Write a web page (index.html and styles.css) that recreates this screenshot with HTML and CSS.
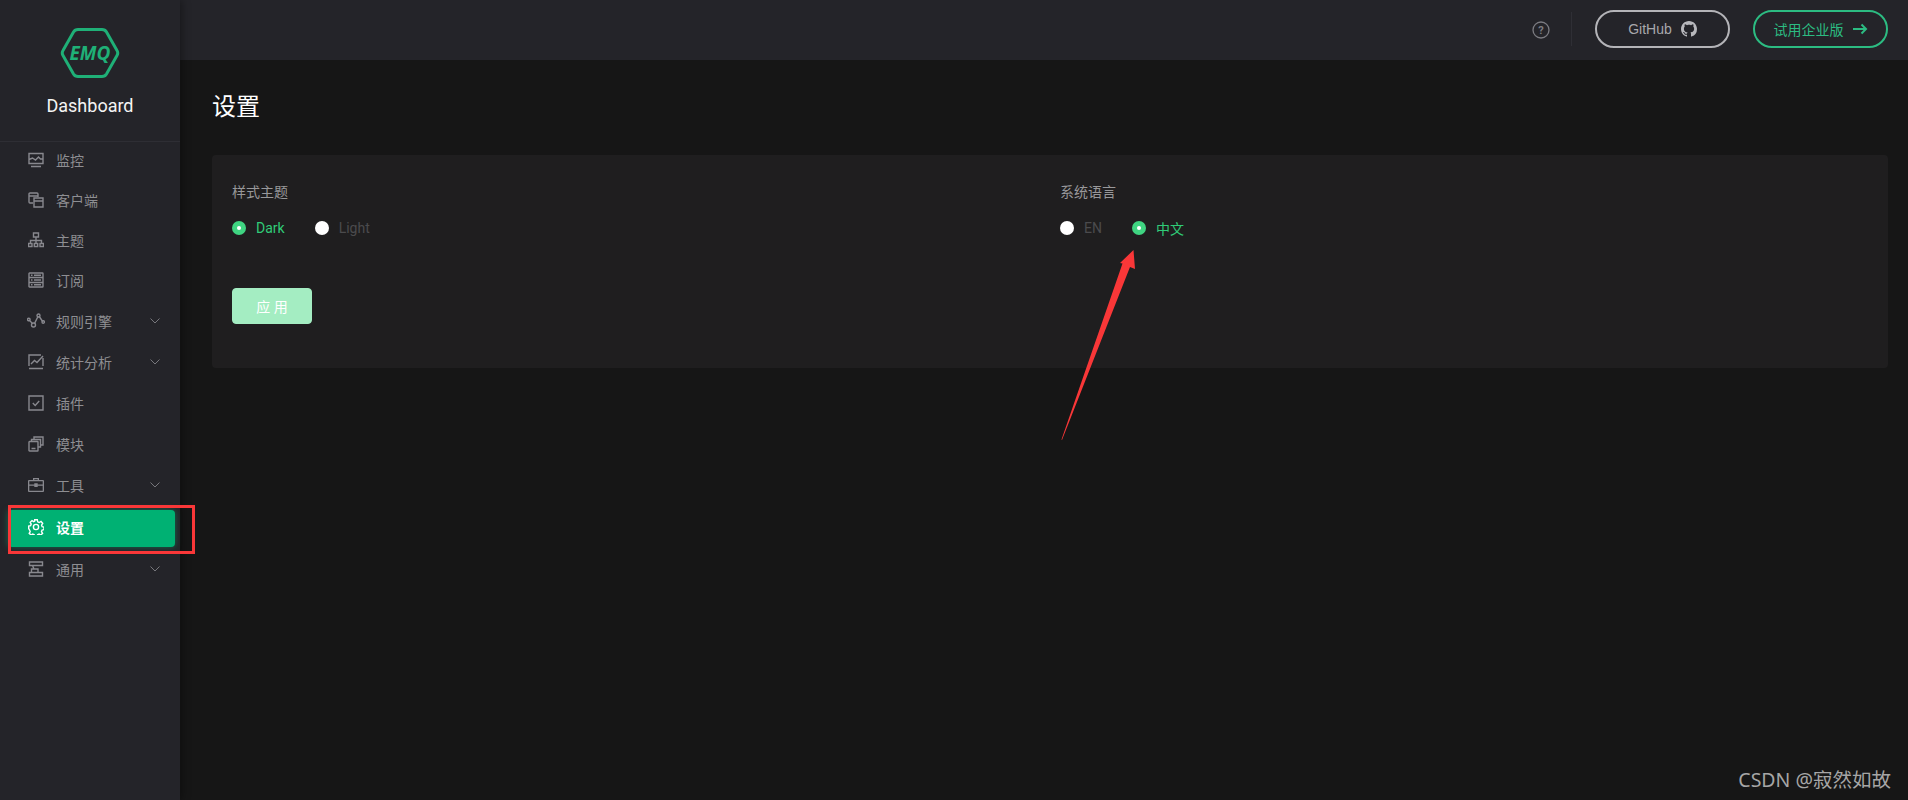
FILE: index.html
```html
<!DOCTYPE html>
<html lang="zh-CN">
<head>
  <meta charset="UTF-8" />
  <meta name="viewport" content="width=device-width, initial-scale=1.0"/>
  <title>EMQ Dashboard</title>
  <link rel="stylesheet" href="styles.css">
</head>
<body>
  <div class="app">
    <aside class="sidebar">
      <div class="logo">
        <svg class="logo-mark" width="60" height="54" viewBox="0 0 60 54">
          <path d="M18 3.500 H42 Q45 3.500 46.500 6 L57 24.500 Q58.500 27 57 29.500 L46.500 48 Q45 50.500 42 50.500 H18 Q15 50.500 13.500 48 L3 29.500 Q1.500 27 3 24.500 L13.500 6 Q15 3.500 18 3.500 Z" fill="none" stroke="#1fb077" stroke-width="3"/>
          <text x="30" y="34" class="logo-text" text-anchor="middle">EMQ</text>
        </svg>
        <div class="logo-title">Dashboard</div>
      </div>

      <nav class="menu">
        <a class="menu-item">
          <svg class="menu-icon" viewBox="0 0 16 16"><path d="M1 1.500h14v10H1zM3 14.500h10M1 7.500l3.500-1.500 3 2 3-3 2 2h2"/></svg>
          <span>监控</span>
        </a>
        <a class="menu-item">
          <svg class="menu-icon" viewBox="0 0 16 16"><path d="M5 11H2a1 1 0 0 1-1-1V2a1 1 0 0 1 1-1h7a1 1 0 0 1 1 1v3M1 4h9M6 6h9v9H6zM6 9h9"/></svg>
          <span>客户端</span>
        </a>
        <a class="menu-item">
          <svg class="menu-icon" viewBox="0 0 16 16"><path d="M5.500 1h5v4h-5zM8 5v4M2.500 11V8.500h11V11M8 9v2M.5 11.500h3.500v3h-3.500zM6.300 11.500h3.400v3h-3.400zM12 11.500h3.500v3H12z"/></svg>
          <span>主题</span>
        </a>
        <a class="menu-item">
          <svg class="menu-icon" viewBox="0 0 16 16"><path d="M1.500 1h13a.5.500 0 0 1 .5.500v13a.5.500 0 0 1-.5.500h-13a.5.500 0 0 1-.5-.500v-13a.5.500 0 0 1 .5-.500zM1 5.500h14M1 10.500h14M3 3.300h1.500M3 8h1.500M3 12.800h1.500M6 3.300h7M6 8h7M6 12.800h7"/></svg>
          <span>订阅</span>
        </a>
        <a class="menu-item tall">
          <svg class="menu-icon wide" viewBox="0 0 18 16"><path d="M2.500 7.500l3 3M7.500 10.500L11 3.500M12.200 3.500l3.500 5"/><circle cx="1.800" cy="6.500" r="1.300"/><circle cx="6.500" cy="12" r="2"/><circle cx="11.500" cy="2.500" r="1.500"/><circle cx="16.200" cy="9" r="1.200"/></svg>
          <span>规则引擎</span>
          <svg class="chevron" viewBox="0 0 10 6"><path d="M.5.500L5 5 9.500.500"/></svg>
        </a>
        <a class="menu-item">
          <svg class="menu-icon" viewBox="0 0 16 16"><path d="M13 1H1v11M1 14.500h14M3 10l3.500-3.500 2.500 2L15 2M15 4v8"/></svg>
          <span>统计分析</span>
          <svg class="chevron" viewBox="0 0 10 6"><path d="M.5.500L5 5 9.500.500"/></svg>
        </a>
        <a class="menu-item tall">
          <svg class="menu-icon" viewBox="0 0 16 16"><path d="M1 1h14v14H1zM4.800 8l2.400 2.400 4-4.400"/></svg>
          <span>插件</span>
        </a>
        <a class="menu-item">
          <svg class="menu-icon" viewBox="0 0 16 16"><path d="M1.500 5.500h8a.5.500 0 0 1 .5.500v8.500a.5.500 0 0 1-.5.500h-8a.5.500 0 0 1-.5-.500V6a.5.500 0 0 1 .5-.500zM3.500 12.500h4M3.500 5V3.500h9V11H10.500M6 3V1h9v8h-2"/></svg>
          <span>模块</span>
        </a>
        <a class="menu-item low">
          <svg class="menu-icon solid" viewBox="0 0 16 16"><path fill-rule="evenodd" d="M5 3V1h6v2h4a1 1 0 0 1 1 1v10a1 1 0 0 1-1 1H1a1 1 0 0 1-1-1V4a1 1 0 0 1 1-1zm1.300 0h3.400V2.300H6.300zM1.300 4.300v3.200h5V6.300h3.400v1.200h5V4.300zm0 4.500v4.900h13.400V8.800h-5V10H6.300V8.800z"/></svg>
          <span>工具</span>
          <svg class="chevron" viewBox="0 0 10 6"><path d="M.5.500L5 5 9.500.500"/></svg>
        </a>
        <a class="menu-item active">
          <svg class="menu-icon" viewBox="0 0 16 16"><circle cx="8" cy="8" r="2.600"/><path d="M6.700.8h2.600l.4 2 1.500.7 1.800-1 1.700 1.900-1.100 1.700.5 1.500 1.900.5v2.500l-1.900.5-.6 1.500 1.100 1.700-1.800 1.800-1.700-1-1.500.6-.5 1.800H6.600l-.4-1.800-1.500-.6-1.700 1-1.800-1.800 1-1.700-.6-1.500L.7 9.600V7.100l1.900-.5.600-1.500-1-1.700L4 1.600l1.700 1 1-.6z"/></svg>
          <span>设置</span>
        </a>
        <a class="menu-item">
          <svg class="menu-icon" viewBox="0 0 16 16"><path d="M1.500 1h13v3.500h-13zM1.500 11.500h13V15h-13zM4.500 4.500L6 8h4v3.500M6 8H3.500v3.500"/></svg>
          <span>通用</span>
          <svg class="chevron" viewBox="0 0 10 6"><path d="M.5.500L5 5 9.500.500"/></svg>
        </a>
      </nav>
    </aside>

    <div class="main">
      <header class="topbar">
        <svg class="help" width="18" height="18" viewBox="0 0 18 18">
          <circle cx="9" cy="9" r="8"/>
          <text x="9" y="13" text-anchor="middle">?</text>
        </svg>
        <span class="topbar-line"></span>
        <a class="pill">
          GitHub
          <svg width="16" height="16" viewBox="0 0 16 16"><path fill="#b8b8bc" d="M8 0C3.580 0 0 3.580 0 8c0 3.540 2.290 6.530 5.470 7.590.4.070.55-.17.55-.38 0-.19-.01-.82-.01-1.490-2.010.37-2.530-.49-2.690-.94-.09-.23-.48-.94-.82-1.130-.28-.15-.68-.52-.01-.53.630-.01 1.080.58 1.230.82.720 1.210 1.870.870 2.330.660.070-.520.280-.870.510-1.070-1.780-.200-3.640-.890-3.640-3.950 0-.870.310-1.590.820-2.150-.080-.200-.360-1.020.080-2.120 0 0 .670-.210 2.200.820.640-.180 1.320-.270 2-.270s1.360.090 2 .270c1.530-1.040 2.200-.820 2.200-.820.440 1.100.160 1.920.080 2.120.510.560.820 1.270.820 2.150 0 3.070-1.870 3.750-3.650 3.950.290.250.540.730.540 1.480 0 1.070-.010 1.930-.010 2.200 0 .210.150.460.550.380A8.010 8.010 0 0 0 16 8c0-4.420-3.580-8-8-8z"/></svg>
        </a>
        <a class="pill pill-green">
          试用企业版
          <svg class="arrow-right" width="15" height="12" viewBox="0 0 15 12"><path d="M0 6h13M8.500 1.500L13 6l-4.500 4.500"/></svg>
        </a>
      </header>

      <main class="content">
        <h1 class="page-title">设置</h1>
        <section class="panel">
          <div class="settings-row">
            <div class="field">
              <div class="field-label">样式主题</div>
              <div class="radio-group">
                <label class="radio checked"><i></i>Dark</label>
                <label class="radio"><i></i>Light</label>
              </div>
            </div>
            <div class="field">
              <div class="field-label">系统语言</div>
              <div class="radio-group">
                <label class="radio"><i></i>EN</label>
                <label class="radio checked"><i></i>中文</label>
              </div>
            </div>
          </div>
          <button class="apply-btn" type="button">应 用</button>
        </section>
      </main>
    </div>
  </div>

  <!-- screenshot annotations -->
  <div class="mark-box"></div>
  <svg class="mark-arrow" width="80" height="200" viewBox="0 0 80 200">
    <path fill="#f93738" d="M73.500 0L75 19 70 17 2 190 1.500 189.500 62.500 13.500 60 13z"/>
  </svg>
  <div class="watermark">CSDN @寂然如故</div>
</body>
</html>
```

FILE: styles.css
```css
* { box-sizing: border-box; }
body {
  margin: 0;
  height: 800px;
  overflow: hidden;
  background: #161616;
  font-family: Roboto, "Noto Sans CJK SC", sans-serif;
  font-size: 14px;
}
.app { display: flex; height: 800px; }

.sidebar {
  width: 180px;
  flex-shrink: 0;
  background: #242429;
  box-shadow: 2px 0 8px rgba(0, 0, 0, 0.35);
  position: relative;
  z-index: 1;
}
.logo {
  height: 142px;
  border-bottom: 1px solid #2e2e34;
  padding-top: 26px;
  display: flex;
  flex-direction: column;
  align-items: center;
}
.logo-text {
  font-family: "Open Sans", sans-serif;
  font-size: 19px;
  font-weight: 700;
  font-style: italic;
  fill: #1fb077;
}
.logo-title {
  margin-top: 14px;
  font-size: 18px;
  line-height: 24px;
  color: #f4f4f4;
}

.menu { display: flex; flex-direction: column; margin-top: -2px; }
.menu-item {
  height: 40px;
  padding: 0 20px 0 28px;
  display: flex;
  align-items: center;
  color: #8e8e92;
  font-size: 14px;
}
.menu-item.tall { height: 42px; }
.menu-item.low { padding-top: 2px; }
.menu-icon {
  width: 16px;
  height: 16px;
  margin-right: 12px;
  fill: none;
  stroke: #88888e;
  stroke-width: 1.400;
  flex-shrink: 0;
}
.menu-icon.wide { width: 18px; margin-left: -1px; margin-right: 11px; }
.menu-icon.solid { fill: #88888e; stroke: none; }
.chevron {
  width: 10px;
  height: 6px;
  margin-left: auto;
  fill: none;
  stroke: #77777c;
  stroke-width: 1;
}
.menu-item.active {
  height: 37px;
  margin: 6px 5px 2px 8px;
  padding-left: 20px;
  padding-bottom: 3px;
  background: #00b173;
  border-radius: 4px;
  box-shadow: 0 0 6px rgba(0, 177, 115, 0.5);
  color: #fff;
  font-weight: 700;
}
.menu-item.active .menu-icon { stroke: #fff; }

.main { flex: 1; display: flex; flex-direction: column; min-width: 0; }
.topbar {
  height: 60px;
  background: #242429;
  display: flex;
  align-items: center;
  justify-content: flex-end;
  padding: 0 20px 2px;
}
.help { margin: 2px 21px 0 0; }
.help circle { fill: none; stroke: #7c7c82; stroke-width: 1.300; }
.help text { font-size: 11px; font-weight: 700; fill: #7c7c82; }
.topbar-line { width: 1px; height: 34px; background: #2f2f35; margin-right: 23px; }
.pill {
  width: 135px;
  height: 38px;
  border: 2px solid #b4b4b8;
  border-radius: 19px;
  display: flex;
  align-items: center;
  justify-content: center;
  gap: 9px;
  color: #a8a8ac;
  font-family: "Liberation Sans", "Noto Sans CJK SC", sans-serif;
  font-size: 14px;
}
.pill-green { margin-left: 23px; border-color: #2cbc82; color: #2cbc82; }
.arrow-right { fill: none; stroke: #2cbc82; stroke-width: 2; }

.content { flex: 1; padding: 0 20px 0 32px; }
.page-title {
  margin: 0;
  height: 95px;
  padding-top: 29px;
  color: #fff;
  font-size: 24px;
  line-height: 36px;
  font-weight: 400;
}
.panel {
  height: 213px;
  background: #1f1e1f;
  border-radius: 4px;
  padding: 27px 20px 0;
}
.settings-row { display: grid; grid-template-columns: 828px 1fr; }
.field-label { color: #98989a; font-size: 14px; line-height: 20px; }
.radio-group { display: flex; gap: 30px; margin-top: 16px; height: 20px; }
.radio {
  display: flex;
  align-items: center;
  gap: 10px;
  color: #4b4b4d;
  font-size: 14px;
}
.radio i {
  width: 14px;
  height: 14px;
  border-radius: 50%;
  background: #fff;
}
.radio.checked { color: #30cc78; }
.radio.checked i {
  background: #3fd481;
  position: relative;
}
.radio.checked i::after {
  content: "";
  position: absolute;
  left: 5px;
  top: 5px;
  width: 4px;
  height: 4px;
  border-radius: 50%;
  background: #fff;
}
.apply-btn {
  display: block;
  margin-top: 50px;
  width: 80px;
  height: 36px;
  border: 1px solid #a4edc2;
  border-radius: 4px;
  background: #a4edc2;
  color: #fff;
  font-family: inherit;
  font-size: 14px;
}

.mark-box {
  position: absolute;
  left: 8px;
  top: 505px;
  width: 187px;
  height: 49px;
  border: 3px solid #f93738;
  z-index: 2;
}
.mark-arrow { position: absolute; left: 1060px; top: 250px; z-index: 2; }
.watermark {
  position: absolute;
  right: 17px;
  top: 767px;
  color: #a6a6a6;
  font-family: "Noto Sans", "Noto Sans CJK SC", sans-serif;
  font-size: 19.500px;
  line-height: 26px;
}
```
